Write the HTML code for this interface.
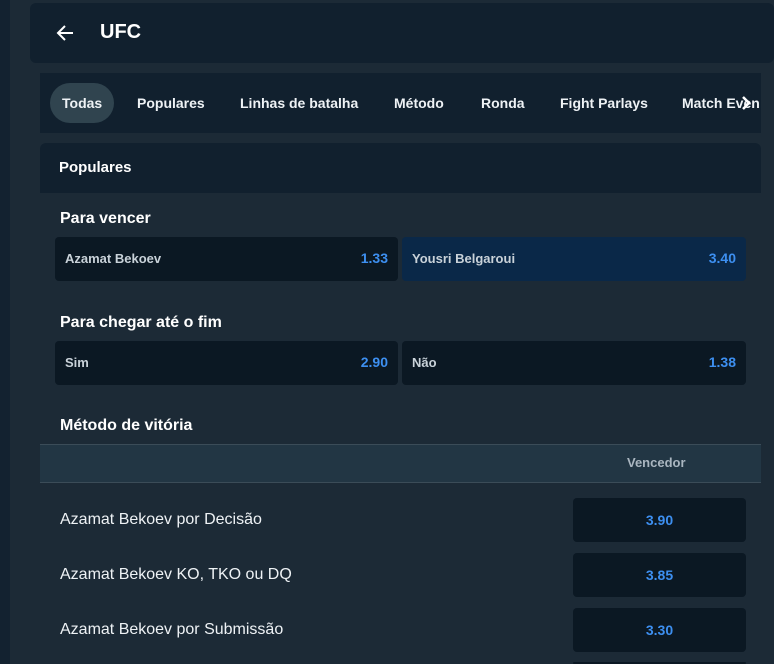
<!DOCTYPE html>
<html style="width:774px;height:664px;overflow:hidden"><head><meta charset="utf-8"><style>
*{margin:0;padding:0;box-sizing:border-box}
body{width:774px;height:664px;overflow:hidden;background:#1c2a36;font-family:"Liberation Sans",sans-serif;color:#fff;position:relative}
.strip{position:absolute;left:0;top:0;width:10px;height:664px;background:#132230}
.box{position:absolute;background:#11202e}
.hdr{left:30px;top:3px;width:744px;height:60px;border-radius:6px}
.tabs{left:40px;top:73px;width:721px;height:60px;overflow:hidden}
.tab{position:absolute;top:30px;transform:translateY(-50%);font-size:14px;font-weight:bold;white-space:nowrap;color:#eef2f5}
.pill{position:absolute;left:10px;top:10px;width:64px;height:40px;border-radius:20px;background:#30444f}
.pop{left:40px;top:143px;width:721px;height:50px;border-radius:6px 6px 0 0}
.h{position:absolute;font-weight:bold;font-size:16px}
.btn{position:absolute;height:44px;border-radius:4px;background:#0b1823;font-size:13px;font-weight:bold;color:#c9d2d9}
.btn span{position:absolute;left:10px;top:14px}
.btn b{position:absolute;right:10px;top:13px;color:#3d8ff0;font-size:14px}
.th{position:absolute;left:40px;top:444px;width:721px;height:39px;background:#223644;border-top:1px solid #3b4c58;border-bottom:1px solid #3b4c58}
.row{position:absolute;left:60px;font-size:16px;color:#eef2f5}
.ob{position:absolute;left:573px;width:173px;height:44px;border-radius:4px;background:#0b1823;color:#3d8ff0;font-size:14px;font-weight:bold;text-align:center;line-height:44px}
</style></head><body>
<div class="strip"></div>
<div class="box hdr">
<svg style="position:absolute;left:25px;top:21px" width="20" height="18" viewBox="0 0 20 18"><path d="M18 9H3M10 2L3 9l7 7" stroke="#fff" stroke-width="2" fill="none"/></svg>
<div style="position:absolute;left:70px;top:18px;font-size:20px;font-weight:bold">UFC</div>
</div>
<div class="box tabs">
<div class="pill"></div>
<div class="tab" style="left:22px">Todas</div>
<div class="tab" style="left:97px">Populares</div>
<div class="tab" style="left:200px">Linhas de batalha</div>
<div class="tab" style="left:354px">Método</div>
<div class="tab" style="left:441px">Ronda</div>
<div class="tab" style="left:520px">Fight Parlays</div>
<div class="tab" style="left:642px">Match Even</div>
<svg style="position:absolute;left:700px;top:22px" width="12" height="16" viewBox="0 0 12 16"><path d="M3 2l6 6-6 6" stroke="#fff" stroke-width="2.5" fill="none"/></svg>
</div>
<div class="box pop"><div class="h" style="left:19px;top:16px;font-size:15px">Populares</div></div>
<div class="h" style="left:60px;top:210px">Para vencer</div>
<div class="btn" style="left:55px;top:237px;width:343px"><span>Azamat Bekoev</span><b>1.33</b></div>
<div class="btn" style="left:402px;top:237px;width:344px;background:#0a2848"><span>Yousri Belgaroui</span><b>3.40</b></div>
<div class="h" style="left:60px;top:314px">Para chegar até o fim</div>
<div class="btn" style="left:55px;top:341px;width:343px"><span>Sim</span><b>2.90</b></div>
<div class="btn" style="left:402px;top:341px;width:344px"><span>Não</span><b>1.38</b></div>
<div class="h" style="left:60px;top:417px">Método de vitória</div>
<div class="th"><div style="position:absolute;left:587px;top:10px;font-size:13px;font-weight:bold;color:#aab6c0">Vencedor</div></div>
<div class="row" style="top:511px">Azamat Bekoev por Decisão</div>
<div class="ob" style="top:498px">3.90</div>
<div class="row" style="top:566px">Azamat Bekoev KO, TKO ou DQ</div>
<div class="ob" style="top:553px">3.85</div>
<div class="row" style="top:621px">Azamat Bekoev por Submissão</div>
<div class="ob" style="top:608px">3.30</div>
<div class="ob" style="top:662px;height:2px"></div>
</body></html>
